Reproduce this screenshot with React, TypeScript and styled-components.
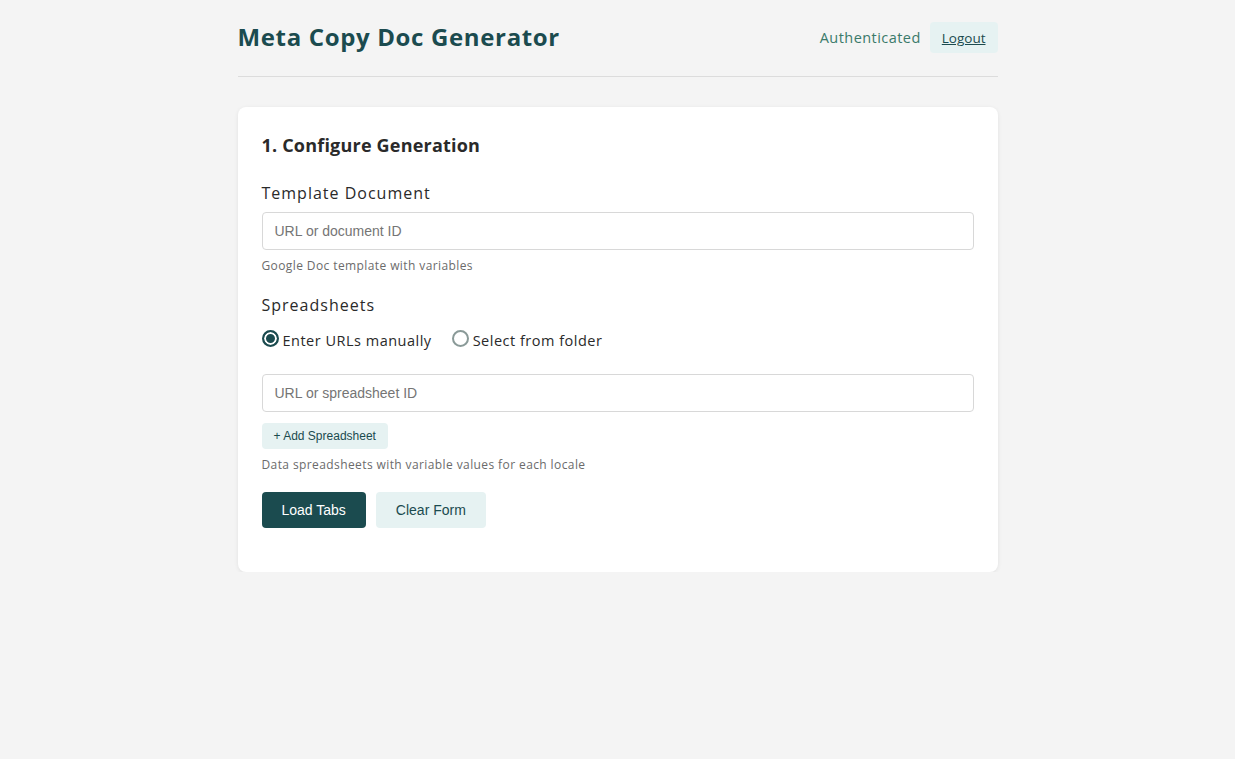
import React, { useState } from "react";
import styled, { createGlobalStyle } from "styled-components";

const Global = createGlobalStyle`
  html, body { margin: 0; padding: 0; background: #f4f4f4; }
  body { font-family: "Open Sans", "Noto Sans", sans-serif; color: #2a2a2a; }
  * { box-sizing: border-box; }
`;

const Page = styled.div`
  width: 760px;
  margin: 0 auto;
  padding-top: 20px;
`;

const Header = styled.header`
  display: flex;
  align-items: center;
  justify-content: space-between;
  height: 35px;
  padding-bottom: 21px;
  border-bottom: 1px solid #dcdcdc;
  box-sizing: content-box;
`;

const Title = styled.h1`
  margin: -2px 0 0;
  font-size: 24px;
  font-weight: 700;
  color: #1b4b4f;
  letter-spacing: 0.65px;
`;

const Auth = styled.div`
  display: flex;
  align-items: center;
  gap: 9px;
`;

const AuthText = styled.span`
  font-size: 14.5px;
  color: #3a7a6a;
  letter-spacing: 0.45px;
  margin-top: -1px;
`;

const LogoutButton = styled.button`
  border: none;
  background: #e6f2f2;
  color: #1b4b4f;
  font-family: inherit;
  font-size: 13.5px;
  font-weight: 500;
  text-decoration: underline;
  padding: 0 12px;
  height: 31px;
  border-radius: 4px;
  cursor: pointer;
`;

const Card = styled.section`
  margin-top: 30px;
  background: #fff;
  border-radius: 8px;
  box-shadow: 0 1px 4px rgba(0, 0, 0, 0.08);
  padding: 26px 24px 44px;
`;

const CardTitle = styled.h2`
  margin: 0 0 25px;
  font-size: 18px;
  font-weight: 700;
  color: #2a2a2a;
  letter-spacing: 0.2px;
`;

const Field = styled.div<{ $mb?: number }>`
  display: flex;
  flex-direction: column;
  margin-bottom: ${(p) => p.$mb ?? 20}px;
`;

const Label = styled.label`
  font-size: 16px;
  color: #2a2a2a;
  margin-bottom: 8px;
  letter-spacing: 1px;
`;

const Input = styled.input`
  width: 100%;
  height: 38px;
  border: 1px solid #d8d8d8;
  border-radius: 4px;
  padding: 0 12px;
  font-family: "Liberation Sans", Arial, sans-serif;
  font-size: 14px;
  color: #333;
  &::placeholder { color: #757575; }
  outline: none;
`;

const Hint = styled.div`
  font-size: 12px;
  color: #6b6b6b;
  margin-top: 7px;
  letter-spacing: 0.4px;
`;

const RadioRow = styled.div`
  display: flex;
  gap: 20px;
  margin-top: 7px;
  margin-bottom: 24px;
`;

const RadioOption = styled.label`
  display: flex;
  align-items: center;
  gap: 4px;
  font-size: 14.5px;
  color: #2a2a2a;
  cursor: pointer;
  letter-spacing: 0.5px;
`;

const RadioDot = styled.span<{ $checked: boolean }>`
  width: 17px;
  height: 17px;
  border-radius: 50%;
  border: 2px solid ${(p) => (p.$checked ? "#1b4b4f" : "#8a9a98")};
  background: ${(p) => (p.$checked ? "#1b4b4f" : "#fff")};
  box-shadow: ${(p) => (p.$checked ? "inset 0 0 0 2px #fff" : "none")};
  margin-top: -5px;
`;

const SmallButton = styled.button`
  align-self: flex-start;
  margin-top: 11px;
  border: none;
  background: #e6f2f2;
  color: #1b4b4f;
  font-family: "Liberation Sans", Arial, sans-serif;
  font-size: 12px;
  height: 26px;
  padding: 0 12px;
  border-radius: 4px;
  cursor: pointer;
`;

const Actions = styled.div`
  display: flex;
  gap: 10px;
  margin-top: 19px;
`;

const ActionButton = styled.button<{ $primary?: boolean }>`
  height: 36px;
  padding: 0 20px;
  border: none;
  border-radius: 4px;
  font-family: "Liberation Sans", Arial, sans-serif;
  font-size: 14px;
  cursor: pointer;
  background: ${(p) => (p.$primary ? "#1b4b4f" : "#e6f2f2")};
  color: ${(p) => (p.$primary ? "#fff" : "#1b4b4f")};
`;

export default function App() {
  const [mode, setMode] = useState<"manual" | "folder">("manual");
  return (
    <>
      <Global />
      <Page>
        <Header>
          <Title>Meta Copy Doc Generator</Title>
          <Auth>
            <AuthText>Authenticated</AuthText>
            <LogoutButton>Logout</LogoutButton>
          </Auth>
        </Header>
        <Card>
          <CardTitle>1. Configure Generation</CardTitle>
          <Field>
            <Label>Template Document</Label>
            <Input placeholder="URL or document ID" />
            <Hint>Google Doc template with variables</Hint>
          </Field>
          <Field $mb={0}>
            <Label>Spreadsheets</Label>
            <RadioRow>
              <RadioOption onClick={() => setMode("manual")}>
                <RadioDot $checked={mode === "manual"} />
                Enter URLs manually
              </RadioOption>
              <RadioOption onClick={() => setMode("folder")}>
                <RadioDot $checked={mode === "folder"} />
                Select from folder
              </RadioOption>
            </RadioRow>
            <Input placeholder="URL or spreadsheet ID" />
            <SmallButton>+ Add Spreadsheet</SmallButton>
            <Hint>Data spreadsheets with variable values for each locale</Hint>
          </Field>
          <Actions>
            <ActionButton $primary>Load Tabs</ActionButton>
            <ActionButton>Clear Form</ActionButton>
          </Actions>
        </Card>
      </Page>
    </>
  );
}
